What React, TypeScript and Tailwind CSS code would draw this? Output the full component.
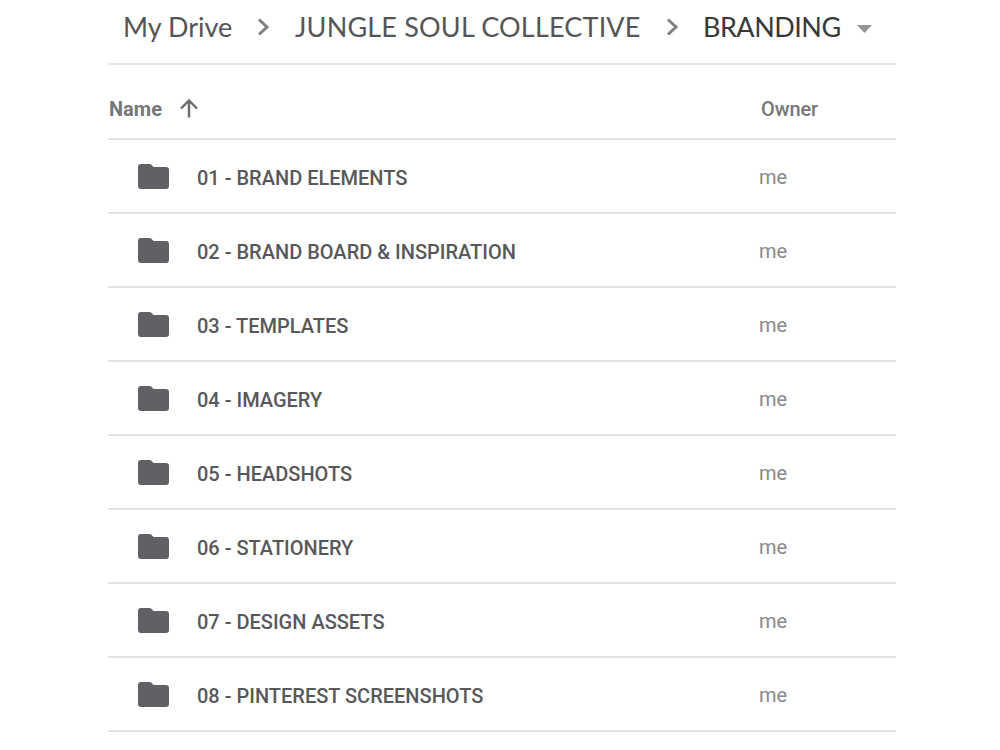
import React from "react";

interface FolderT {
  name: string;
  owner: string;
}

const folders: FolderT[] = [
  { name: "01 - BRAND ELEMENTS", owner: "me" },
  { name: "02 - BRAND BOARD & INSPIRATION", owner: "me" },
  { name: "03 - TEMPLATES", owner: "me" },
  { name: "04 - IMAGERY", owner: "me" },
  { name: "05 - HEADSHOTS", owner: "me" },
  { name: "06 - STATIONERY", owner: "me" },
  { name: "07 - DESIGN ASSETS", owner: "me" },
  { name: "08 - PINTEREST SCREENSHOTS", owner: "me" },
];

const Chevron: React.FC = () => (
  <svg className="w-[13px] h-[18px] shrink-0" viewBox="0 0 13 18" fill="none">
    <path d="M2 1.5 L10 9 L2 16.5" stroke="#808080" strokeWidth="3" />
  </svg>
);

const FolderIcon: React.FC = () => (
  <svg className="w-[31px] h-[25px] mt-px shrink-0" viewBox="0 0 31 25">
    <path
      d="M3 0 H11.5 Q12.6 0 13.4 0.8 L15.6 3 H28 Q31 3 31 6 V22 Q31 25 28 25 H3 Q0 25 0 22 V3 Q0 0 3 0 Z"
      fill="#5f6165"
    />
  </svg>
);

const Breadcrumbs: React.FC = () => (
  <nav className="flex items-center h-[65px] pb-[9px] pl-[15px] border-b-2 border-[#e3e3e3] font-['Lato',sans-serif] text-[27px] leading-none text-[#555558] whitespace-nowrap">
    <div className="w-[134px] pb-[2px]">My Drive</div>
    <Chevron />
    <div className="w-[371px] ml-[25px] pb-[2px] tracking-[0.18px]">JUNGLE SOUL COLLECTIVE</div>
    <Chevron />
    <div className="w-[154px] ml-[24px] pb-[2px] tracking-[-0.5px] text-[#38383b]">BRANDING</div>
    <svg className="w-[15px] h-[8px] mt-[3px] shrink-0" viewBox="0 0 15 8">
      <path d="M0 0 H15 L7.5 8 Z" fill="#959595" />
    </svg>
  </nav>
);

const TableHeader: React.FC = () => (
  <div className="flex items-center h-[75px] pt-[13px] border-b-2 border-[#e3e3e3] text-[20px] leading-none text-[#77777a]">
    <div className="w-[72px] pl-px pt-[2px] font-bold">Name</div>
    <svg className="w-[18px] h-[19px]" viewBox="0 0 18 19" fill="none">
      <path d="M9 18.5 V2 M1 9.5 L9 1.5 L17 9.5" stroke="#6c6c6c" strokeWidth="2.4" />
    </svg>
    <div className="ml-auto w-[135px] pt-[2px] font-medium tracking-[-0.1px]">Owner</div>
  </div>
);

const FolderRow: React.FC<{ folder: FolderT }> = ({ folder }) => (
  <li className="flex items-center h-[74px] pl-[30px] border-b-2 border-[#e3e3e3] text-[20px] leading-none whitespace-nowrap">
    <FolderIcon />
    <div className="ml-7 pt-[3px] font-medium text-[#58585b]">{folder.name}</div>
    <div className="ml-auto w-[137px] pt-[2px] text-[#89898b]">{folder.owner}</div>
  </li>
);

const App: React.FC = () => {
  return (
    <div className="h-[750px] overflow-hidden bg-white font-['Roboto',sans-serif]">
      <main className="ml-[108px] w-[788px]">
        <Breadcrumbs />
        <TableHeader />
        <ul>
          {folders.map((folder) => (
            <FolderRow key={folder.name} folder={folder} />
          ))}
        </ul>
      </main>
    </div>
  );
};

export default App;
